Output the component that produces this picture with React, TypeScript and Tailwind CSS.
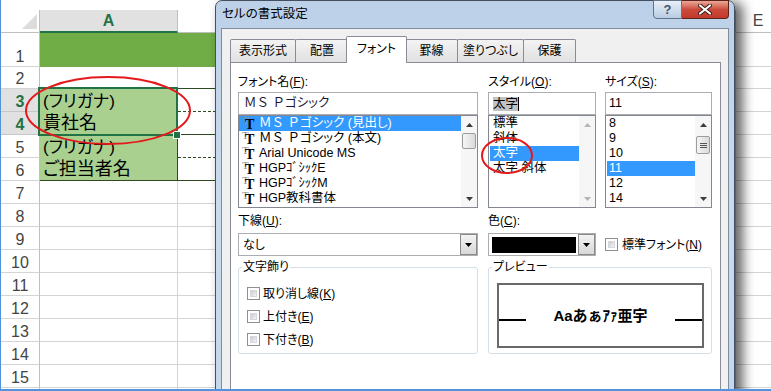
import React from 'react';

const UI = "font-['Liberation_Sans','Noto_Sans_CJK_JP',sans-serif] [font-feature-settings:'palt']";
const SHEET = "font-['Liberation_Sans','Noto_Sans_CJK_JP',sans-serif]";

const rows = [
  { n: 1, h: 'h-[34px]' },
  { n: 2, h: 'h-[22px]' },
  { n: 3, h: 'h-[23px]' },
  { n: 4, h: 'h-[23px]' },
  { n: 5, h: 'h-[23px]' },
  { n: 6, h: 'h-[23px]' },
  { n: 7, h: 'h-[23px]' },
  { n: 8, h: 'h-[23px]' },
  { n: 9, h: 'h-[23px]' },
  { n: 10, h: 'h-[23px]' },
  { n: 11, h: 'h-[23px]' },
  { n: 12, h: 'h-[23px]' },
  { n: 13, h: 'h-[23px]' },
  { n: 14, h: 'h-[23px]' },
  { n: 15, h: 'h-[23px]' },
];

const lowerRows = rows.slice(6);

function RowHeaders() {
  return (
    <div className="w-[39px] shrink-0 flex flex-col">
      <div className="h-[23px] border-b border-r border-[#bfbfbf] flex items-end justify-end pr-[2px] pb-[3px]">
        <svg width="15" height="15" viewBox="0 0 15 15">
          <path d="M15 0V15H0Z" fill="#dcdcdc" />
        </svg>
      </div>
      {rows.map((r) => {
        const sel = r.n === 3 || r.n === 4;
        return (
          <div
            key={r.n}
            className={`${r.h} border-b border-r flex items-end justify-center text-[16px] leading-[18px] ${
              sel
                ? 'bg-[#e1e1e1] text-[#217346] font-bold border-b-[#c6c6c6] border-r-[#217346]'
                : 'text-[#444] border-b-[#d4d4d4] border-r-[#bfbfbf]'
            }`}
          >
            {r.n}
          </div>
        );
      })}
      <div className="h-[23px] border-r border-[#bfbfbf]" />
    </div>
  );
}

function HeaderCell({ label, width }: { label: string; width: string }) {
  return (
    <div className={`${width} h-[23px] border-b border-r border-[#bfbfbf] bg-white flex items-center justify-center text-[16px] text-[#444]`}>
      {label}
    </div>
  );
}

function ColumnA() {
  return (
    <div className="w-[138px] shrink-0 flex flex-col">
      <div className="h-[23px] bg-[#e1e1e1] border-b-2 border-b-[#217346] border-r border-r-[#bfbfbf] flex items-center justify-center text-[16px] font-bold text-[#217346]">
        A
      </div>
      <div className="h-[34px] bg-[#70ad47]" />
      <div className="h-[22px] border-b border-b-[#2f4a22] border-r border-r-[#d4d4d4]" />
      <div className="relative h-[46px] bg-[#a9d08e] border-b border-r border-[#2f4a22] pl-[3px] text-black [font-feature-settings:'palt']">
        <div className="h-[23px] leading-[25px] text-[17px]">(フリガナ)</div>
        <div className="h-[22px] leading-[22px] text-[18px]">貴社名</div>
        <div className="absolute left-[-2px] top-[-2px] right-[-1px] bottom-[-2px] border-2 border-[#217346] z-10">
          <div className="absolute right-[-4px] bottom-[-4px] w-[6px] h-[6px] bg-[#217346] outline outline-1 outline-white" />
        </div>
      </div>
      <div className="h-[46px] bg-[#a9d08e] border-b border-r border-[#2f4a22] pl-[3px] text-black [font-feature-settings:'palt']">
        <div className="h-[23px] leading-[25px] text-[17px]">(フリガナ)</div>
        <div className="h-[22px] leading-[22px] text-[18px]">ご担当者名</div>
      </div>
      {lowerRows.map((r) => (
        <div key={r.n} className={`${r.h} border-b border-r border-[#d4d4d4]`} />
      ))}
      <div className="h-[23px] border-r border-[#d4d4d4]" />
    </div>
  );
}

function ColumnB() {
  return (
    <div className="w-[188px] shrink-0 flex flex-col">
      <HeaderCell label="" width="w-full" />
      <div className="h-[34px] bg-[#70ad47]" />
      <div className="h-[22px] border-b border-b-[#2f4a22] border-r border-r-[#d4d4d4]" />
      <div className="h-[23px] border-b border-dashed border-b-[#2f4a22] border-r border-r-[#2f4a22]" />
      <div className="h-[23px] border-b border-b-[#2f4a22] border-r border-r-[#2f4a22]" />
      <div className="h-[23px] border-b border-dashed border-b-[#2f4a22] border-r border-r-[#2f4a22]" />
      <div className="h-[23px] border-b border-b-[#2f4a22] border-r border-r-[#2f4a22]" />
      {lowerRows.map((r) => (
        <div key={r.n} className={`${r.h} border-b border-r border-[#d4d4d4]`} />
      ))}
    </div>
  );
}

function PlainColumn({ label, width }: { label: string; width: string }) {
  return (
    <div className={`${width} shrink-0 flex flex-col`}>
      <HeaderCell label={label} width="w-full" />
      {rows.map((r) => (
        <div key={r.n} className={`${r.h} border-b border-r border-[#d4d4d4]`} />
      ))}
    </div>
  );
}

function Sheet() {
  return (
    <div className={`flex flex-col ${SHEET}`}>
      <div className="h-[10px] bg-white" />
      <div className="flex">
        <RowHeaders />
        <ColumnA />
        <ColumnB />
        <PlainColumn label="" width="w-[185px]" />
        <PlainColumn label="" width="w-[185px]" />
        <PlainColumn label="E" width="w-[45px]" />
        <PlainColumn label="" width="w-[100px]" />
      </div>
    </div>
  );
}

function Arrow({ up, color }: { up?: boolean; color: string }) {
  return (
    <svg width="7" height="4" viewBox="0 0 7 4">
      <path d={up ? 'M3.5 0L7 4H0Z' : 'M0 0H7L3.5 4Z'} fill={color} />
    </svg>
  );
}

function ScrollBar({ thumb, muted }: { thumb?: 'plain' | 'grip'; muted?: boolean }) {
  const fill = muted ? '#b4b4b4' : '#3c3c3c';
  return (
    <div className="w-[16px] shrink-0 flex flex-col bg-[#f6f6f6]">
      <div className="h-[17px] flex items-center justify-center">
        <Arrow up color={fill} />
      </div>
      <div className="flex-1">
        {thumb === 'plain' && (
          <div className="mx-px h-[16px] rounded-[2px] border border-[#9c9c9c] bg-gradient-to-r from-[#f5f5f5] to-[#dadada]" />
        )}
        {thumb === 'grip' && (
          <div className="mx-px mt-[3px] h-[18px] rounded-[2px] border border-[#9c9c9c] bg-gradient-to-r from-[#f5f5f5] to-[#dadada] flex flex-col items-center justify-center gap-[1px]">
            <div className="w-[7px] h-px bg-[#555]" />
            <div className="w-[7px] h-px bg-[#555]" />
            <div className="w-[7px] h-px bg-[#555]" />
          </div>
        )}
      </div>
      <div className="h-[17px] flex items-center justify-center">
        <Arrow color={fill} />
      </div>
    </div>
  );
}

function TTIcon() {
  return (
    <span className="relative w-[14px] h-[14px] shrink-0 mr-[3px] font-['Liberation_Serif',serif] leading-none">
      <span className="absolute left-0 top-[-2px] text-[11px] text-[#909090]">T</span>
      <span className="absolute left-[3px] top-[1px] text-[14px] font-bold text-black">T</span>
    </span>
  );
}

function CheckBox() {
  return (
    <span className="w-[13px] h-[13px] shrink-0 border border-[#8f8f8f] bg-white p-[2px] flex">
      <span className="flex-1 bg-gradient-to-br from-[#c9ccd1] to-[#f4f4f4] border border-[#d6d8db]" />
    </span>
  );
}

function DropButton() {
  return (
    <div className="w-[17px] h-full shrink-0 border border-[#8a8a8a] bg-gradient-to-b from-[#f3f3f3] to-[#d8d8d8] flex items-center justify-center">
      <Arrow color="#000" />
    </div>
  );
}

const fonts = [
  { wide: 'ＭＳ Ｐ', rest: 'ゴシック (見出し)', sel: true },
  { wide: 'ＭＳ Ｐ', rest: 'ゴシック (本文)' },
  { wide: '', rest: 'Arial Unicode MS' },
  { wide: '', rest: 'HGPｺﾞｼｯｸE' },
  { wide: '', rest: 'HGPｺﾞｼｯｸM' },
  { wide: '', rest: 'HGP教科書体' },
];

const styles = [{ name: '標準' }, { name: '斜体' }, { name: '太字', sel: true }, { name: '太字 斜体' }];

const sizes = [{ name: '8' }, { name: '9' }, { name: '10' }, { name: '11', sel: true }, { name: '12' }, { name: '14' }];

const tabs = [
  { label: '表示形式', cls: 'w-[66px]' },
  { label: '配置', cls: 'w-[54px] -ml-px' },
  { label: 'フォント', cls: 'w-[61px] -ml-[3px]', active: true },
  { label: '罫線', cls: 'w-[53px] -ml-[2px]' },
  { label: '塗りつぶし', cls: 'w-[67px] -ml-px' },
  { label: '保護', cls: 'w-[53px] -ml-px' },
];

function Tabs() {
  return (
    <div className="h-[26px] shrink-0 flex items-end">
      {tabs.map((t) =>
        t.active ? (
          <div
            key={t.label}
            className={`${t.cls} h-[27px] -mb-px relative z-10 bg-white border border-b-0 border-[#898c95] rounded-t-[2px] flex items-center justify-center pb-[2px]`}
          >
            {t.label}
          </div>
        ) : (
          <div
            key={t.label}
            className={`${t.cls} h-[23px] border border-b-0 border-[#898c95] rounded-t-[2px] bg-gradient-to-b from-[#f3f3f3] to-[#e1e1e1] flex items-center justify-center`}
          >
            {t.label}
          </div>
        )
      )}
    </div>
  );
}

function FontPanel() {
  return (
    <div className="flex-1 border border-[#898c95] bg-white pt-[10px] pl-[7px]">
      <div className="flex">
        <div className="w-[240px] mr-[10px] flex flex-col">
          <div className="h-[19px] leading-[19px]">
            フォント名(<u>F</u>):
          </div>
          <div className="h-[23px] border border-[#abadb3] pl-[5px] flex items-center text-[#1b1730] text-[12.5px] whitespace-pre">
            <span className="[font-feature-settings:normal]">ＭＳ Ｐ</span>ゴシック
          </div>
          <div className="h-[93px] border border-[#828790] flex">
            <div className="flex-1 flex flex-col text-[12.5px]">
              {fonts.map((f) => (
                <div
                  key={f.rest}
                  className={`h-[15px] pl-[3px] flex items-center whitespace-pre ${f.sel ? 'bg-[#3399ff] text-white' : 'text-black'}`}
                >
                  <TTIcon />
                  {f.wide && <span className="[font-feature-settings:normal]">{f.wide}</span>}
                  {f.rest}
                </div>
              ))}
            </div>
            <ScrollBar thumb="plain" />
          </div>
        </div>
        <div className="w-[108px] mr-[9px] flex flex-col">
          <div className="h-[19px] leading-[19px]">
            スタイル(<u>O</u>):
          </div>
          <div className="h-[23px] border border-[#abadb3] pl-[4px] flex items-center text-[12.5px]">
            <span className="bg-[#c2c2c2] leading-[14px]">太字</span>
            <span className="w-px h-[14px] bg-black" />
          </div>
          <div className="h-[93px] border border-[#828790] flex">
            <div className="flex-1 flex flex-col text-[12.5px] pl-px">
              {styles.map((s) => (
                <div key={s.name} className={`h-[15px] pl-[3px] flex items-center ${s.sel ? 'bg-[#3399ff] text-white' : 'text-black'}`}>
                  {s.name}
                </div>
              ))}
            </div>
            <ScrollBar muted />
          </div>
        </div>
        <div className="w-[107px] flex flex-col">
          <div className="h-[19px] leading-[19px]">
            サイズ(<u>S</u>):
          </div>
          <div className="h-[23px] border border-[#abadb3] pl-[3px] flex items-center text-[12.5px]">11</div>
          <div className="h-[93px] border border-[#828790] flex">
            <div className="flex-1 flex flex-col text-[12.5px] pl-px">
              {sizes.map((s) => (
                <div key={s.name} className={`h-[15px] pl-[2px] flex items-center ${s.sel ? 'bg-[#3399ff] text-white' : 'text-black'}`}>
                  {s.name}
                </div>
              ))}
            </div>
            <ScrollBar thumb="grip" />
          </div>
        </div>
      </div>

      <div className="flex">
        <div className="w-[240px] mr-[10px] flex flex-col">
          <div className="h-[25px] flex items-center">
            下線(<u>U</u>):
          </div>
          <div className="h-[23px] border border-[#abadb3] flex">
            <div className="flex-1 pl-[4px] flex items-center">なし</div>
            <DropButton />
          </div>
        </div>
        <div className="w-[108px] mr-[9px] flex flex-col">
          <div className="h-[25px] flex items-center">
            色(<u>C</u>):
          </div>
          <div className="h-[23px] border border-[#abadb3] flex items-center pl-[3px]">
            <div className="w-[84px] h-[16px] bg-black mr-[2px]" />
            <div className="h-full flex-1 flex">
              <DropButton />
            </div>
          </div>
        </div>
        <div className="w-[107px] flex flex-col">
          <div className="h-[25px]" />
          <div className="h-[23px] flex items-center gap-[4px]">
            <CheckBox />
            <span>
              標準フォント(<u>N</u>)
            </span>
          </div>
        </div>
      </div>

      <div className="flex mt-[11px]">
        <div className="w-[240px] mr-[10px] h-[87px] relative border border-[#d5dfe5] rounded-[3px] pt-[14px] pl-[8px]">
          <div className="absolute top-[-8px] left-[3px] px-px bg-white leading-[15px]">文字飾り</div>
          <div className="h-[23px] flex items-center gap-[3px]">
            <CheckBox />
            <span>
              取り消し線(<u>K</u>)
            </span>
          </div>
          <div className="h-[23px] flex items-center gap-[3px]">
            <CheckBox />
            <span>
              上付き(<u>E</u>)
            </span>
          </div>
          <div className="h-[23px] flex items-center gap-[3px]">
            <CheckBox />
            <span>
              下付き(<u>B</u>)
            </span>
          </div>
        </div>
        <div className="w-[224px] h-[87px] relative border border-[#d5dfe5] rounded-[3px] pt-[15px] pl-[8px]">
          <div className="absolute top-[-8px] left-[3px] px-px bg-white leading-[15px]">プレビュー</div>
          <div className="w-[207px] h-[65px] border-2 border-[#696969]">
            <div className="mt-[22px] flex items-baseline justify-between">
              <div className="w-[27px] h-[2px] bg-black" />
              <span className="text-[15px] leading-[18px] font-bold [font-feature-settings:normal]">Aaあぁｱｧ亜宇</span>
              <div className="w-[27px] h-[2px] bg-black" />
            </div>
          </div>
        </div>
      </div>
    </div>
  );
}

function FormatDialog() {
  return (
    <div
      className={`absolute left-[214px] top-0 w-[520px] h-[420px] rounded-t-[7px] border border-[#44505f] bg-gradient-to-b from-[#bcd1e8] via-[#c9dbef] to-[#c3d7ed] px-[5px] flex flex-col shadow-[7px_3px_12px_1px_rgba(0,0,0,0.6)] ${UI} text-[12px] text-black`}
    >
      <div className="h-[27px] shrink-0 flex justify-between items-start">
        <div className="pl-px pt-[6px] leading-[15px] text-[12.5px]">セルの書式設定</div>
        <div className="flex -mt-px">
          <div className="w-[29px] h-[19px] rounded-bl-[4px] border border-[#62738a] bg-gradient-to-b from-[#e9f0f8] to-[#b9cce2] flex items-center justify-center text-[13px] font-bold text-[#46566a]">
            ?
          </div>
          <div className="w-[47px] h-[19px] rounded-br-[4px] border border-l-0 border-[#5a2219] bg-gradient-to-b from-[#e9a797] via-[#cb4a3b] to-[#c13a2b] flex items-center justify-center">
            <svg width="14" height="11" viewBox="0 0 14 11">
              <path d="M2 1.5L12 9.5M12 1.5L2 9.5" stroke="#3a1a14" strokeWidth="4" strokeLinecap="round" />
              <path d="M2 1.5L12 9.5M12 1.5L2 9.5" stroke="#ffffff" strokeWidth="2.2" strokeLinecap="round" />
            </svg>
          </div>
        </div>
      </div>
      <div className="flex-1 border border-[#7f8c9c] bg-[#f0f0f0] pt-[7px] pl-[8px] pr-[7px] flex flex-col">
        <Tabs />
        <FontPanel />
      </div>
    </div>
  );
}

export default function App() {
  return (
    <div className="w-[771px] h-[391px] border-l border-b-2 border-[#4f94dc] bg-white overflow-hidden">
      <div className="relative w-[770px] h-[389px] overflow-hidden">
        <Sheet />
        <FormatDialog />
        <svg className="absolute inset-0 pointer-events-none z-20" width="770" height="389" viewBox="0 0 770 389">
          <ellipse cx="107" cy="110.5" rx="82" ry="33.5" fill="none" stroke="#e3191c" strokeWidth="2" />
          <ellipse cx="506" cy="155.5" rx="25" ry="17.5" fill="none" stroke="#e3191c" strokeWidth="2" />
        </svg>
      </div>
    </div>
  );
}
